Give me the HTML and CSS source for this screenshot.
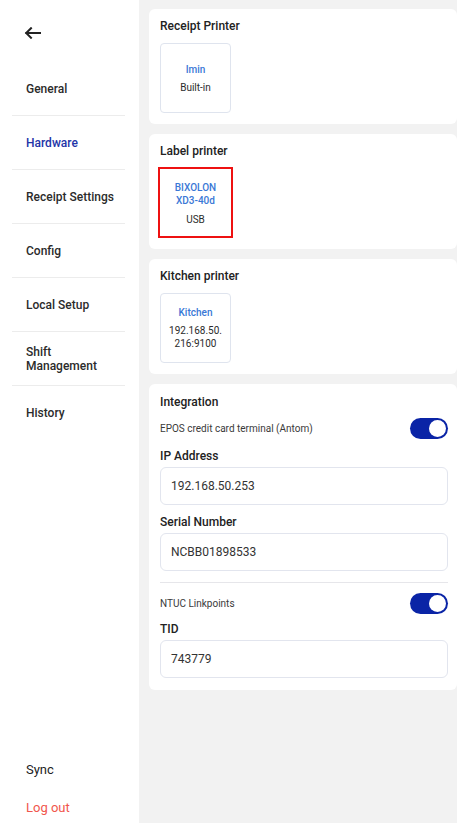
FILE: index.html
```html
<!DOCTYPE html>
<html>
<head>
<meta charset="utf-8">
<link rel="stylesheet" href="styles.css">
</head>
<body>
<div class="app">
  <aside class="sidebar">
    <div class="back">
      <svg width="17" height="12" viewBox="0 0 17 12"><path d="M16 6H2.2M7 1.2L2.2 6L7 10.8" fill="none" stroke="#222" stroke-width="2" stroke-linecap="square"/></svg>
    </div>
    <nav class="nav">
      <div class="nav-item">General</div>
      <div class="nav-item active">Hardware</div>
      <div class="nav-item">Receipt Settings</div>
      <div class="nav-item">Config</div>
      <div class="nav-item">Local Setup</div>
      <div class="nav-item">Shift<br>Management</div>
      <div class="nav-item last">History</div>
    </nav>
    <div class="bottom">
      <div class="sync">Sync</div>
      <div class="logout">Log out</div>
    </div>
  </aside>
  <main class="main">
    <section class="card">
      <div class="card-title">Receipt Printer</div>
      <div class="tile">
        <div class="tile-name">Imin</div>
        <div class="tile-sub">Built-in</div>
      </div>
    </section>
    <section class="card">
      <div class="card-title">Label printer</div>
      <div class="tile selected">
        <div class="tile-name">BIXOLON<br>XD3-40d</div>
        <div class="tile-sub">USB</div>
      </div>
    </section>
    <section class="card">
      <div class="card-title">Kitchen printer</div>
      <div class="tile">
        <div class="tile-name">Kitchen</div>
        <div class="tile-sub">192.168.50.<br>216:9100</div>
      </div>
    </section>
    <section class="card integration">
      <div class="card-title">Integration</div>
      <div class="toggle-row first">
        <span class="toggle-label">EPOS credit card terminal (Antom)</span>
        <span class="toggle"><span class="knob"></span></span>
      </div>
      <div class="field-label">IP Address</div>
      <div class="input">192.168.50.253</div>
      <div class="field-label">Serial Number</div>
      <div class="input">NCBB01898533</div>
      <div class="divider"></div>
      <div class="toggle-row">
        <span class="toggle-label">NTUC Linkpoints</span>
        <span class="toggle"><span class="knob"></span></span>
      </div>
      <div class="field-label tid">TID</div>
      <div class="input">743779</div>
    </section>
  </main>
</div>
</body>
</html>
```
FILE: styles.css
```css
* { box-sizing: border-box; }
html, body { margin: 0; padding: 0; }
body {
  font-family: Roboto, "Noto Sans", "Liberation Sans", sans-serif;
  color: #222;
  background: #f2f2f2;
}
.app {
  display: flex;
  width: 457px;
  height: 823px;
  overflow: hidden;
}
.sidebar {
  width: 139px;
  flex: none;
  background: #fff;
  display: flex;
  flex-direction: column;
}
.back {
  height: 62px;
  padding: 27px 0 0 24px;
}
.back svg { display: block; }
.nav {
  display: flex;
  flex-direction: column;
  padding: 0 14px 0 12px;
}
.nav-item {
  height: 54px;
  display: flex;
  align-items: center;
  padding-left: 14px;
  font-size: 12px;
  font-weight: 500;
  line-height: 14px;
  color: #2b2b2b;
  border-bottom: 1px solid #ececec;
}
.nav-item.last { border-bottom: none; }
.nav-item.active { color: #2335a8; }
.bottom {
  margin-top: auto;
  padding: 0 0 5px 26px;
}
.sync {
  font-size: 13px;
  color: #222;
  height: 20px;
  line-height: 20px;
}
.logout {
  font-size: 13px;
  color: #f1564d;
  height: 20px;
  line-height: 20px;
  margin-top: 18px;
}
.main {
  flex: 1;
  padding: 9px 0 0 10px;
  display: flex;
  flex-direction: column;
  gap: 10px;
}
.card {
  background: #fff;
  border-radius: 6px;
  padding: 9px 9px 11px 11px;
  display: flex;
  flex-direction: column;
  align-items: flex-start;
}
.card-title {
  font-size: 12px;
  font-weight: 500;
  line-height: 16px;
  height: 16px;
  color: #222;
}
.tile {
  margin-top: 9px;
  width: 71px;
  height: 70px;
  border: 1px solid #dfe4ee;
  border-radius: 4px;
  display: flex;
  flex-direction: column;
  align-items: center;
  justify-content: center;
  text-align: center;
  gap: 5px;
  font-size: 10px;
  line-height: 13px;
}
.tile.selected {
  margin-top: 8px;
  margin-left: -2px;
  width: 75px;
  height: 71px;
  border: 2px solid #ee1111;
  border-radius: 0;
  gap: 6px;
  padding-top: 2px;
}
.tile-name { color: #3a78d6; font-weight: 500; }
.tile-sub { color: #2b2b2b; }
.integration { align-items: stretch; padding-top: 10px; padding-bottom: 12px; }
.toggle-row {
  margin-top: 8px;
  height: 21px;
  display: flex;
  align-items: center;
  justify-content: space-between;
}
.toggle-label {
  font-size: 10px;
  color: #3a3a3a;
}
.toggle {
  width: 38px;
  height: 21px;
  border-radius: 11px;
  background: #0a24a6;
  position: relative;
}
.knob {
  position: absolute;
  right: 2px;
  top: 2px;
  width: 17px;
  height: 17px;
  border-radius: 50%;
  background: #fff;
}
.field-label {
  margin-top: 9px;
  font-size: 12px;
  font-weight: 500;
  line-height: 16px;
  color: #222;
}
.field-label.tid { margin-top: 7px; }
.input {
  margin-top: 3px;
  height: 38px;
  border: 1px solid #e2e5ee;
  border-radius: 6px;
  padding: 0 10px;
  display: flex;
  align-items: center;
  font-size: 12px;
  color: #333;
}
.divider {
  margin-top: 11px;
  height: 1px;
  background: #e6e6ea;
}
.divider + .toggle-row { margin-top: 10px; }
```
